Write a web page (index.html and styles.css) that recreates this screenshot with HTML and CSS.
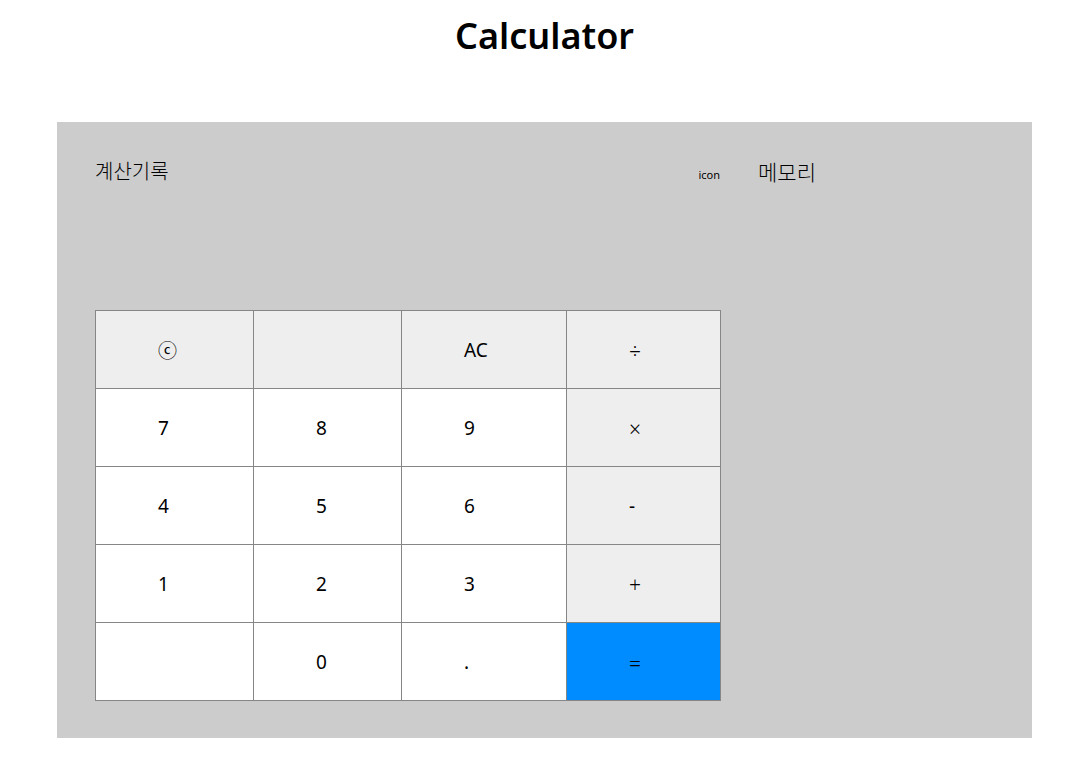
FILE: index.html
```html
<!DOCTYPE html>
<html lang="ko">
<head>
<meta charset="utf-8">
<meta name="viewport" content="width=device-width, initial-scale=1">
<title>Calculator</title>
<link rel="stylesheet" href="styles.css">
</head>
<body>
<h1 class="title">Calculator</h1>
<main class="calculator">
  <section class="main">
    <header class="history">
      <h2 class="heading">계산기록</h2>
      <span class="icon-label">icon</span>
    </header>
    <div class="keypad">
      <button class="key key-op" type="button">ⓒ</button>
      <span class="key key-op"></span>
      <button class="key key-op" type="button">AC</button>
      <button class="key key-op key-sign" type="button">÷</button>
      <button class="key" type="button">7</button>
      <button class="key" type="button">8</button>
      <button class="key" type="button">9</button>
      <button class="key key-op key-sign" type="button">×</button>
      <button class="key" type="button">4</button>
      <button class="key" type="button">5</button>
      <button class="key" type="button">6</button>
      <button class="key key-op" type="button">-</button>
      <button class="key" type="button">1</button>
      <button class="key" type="button">2</button>
      <button class="key" type="button">3</button>
      <button class="key key-op key-sign" type="button">+</button>
      <span class="key"></span>
      <button class="key" type="button">0</button>
      <button class="key" type="button">.</button>
      <button class="key key-sign key-equals" type="button">=</button>
    </div>
  </section>
  <aside class="memory">
    <h2 class="heading heading-memory">메모리</h2>
  </aside>
</main>
</body>
</html>
```
FILE: styles.css
```css
* {
  box-sizing: border-box;
}

body {
  margin: 0;
  background: #fff;
  color: #000;
  font-family: "Noto Sans", "Noto Sans CJK KR", sans-serif;
  font-size: 19px;
}

.title {
  margin: 0 48px 0 57px;
  padding: 10px 0 60px;
  font-size: 36px;
  line-height: 52px;
  font-weight: 600;
  text-align: center;
}

.calculator {
  display: grid;
  grid-template-columns: 626fr 236fr;
  gap: 37px;
  margin: 0 48px 29px 57px;
  padding: 34px 38px 37px;
  background: #ccc;
}

.history {
  display: flex;
  justify-content: space-between;
  align-items: flex-start;
  min-height: 154px;
}

.heading {
  margin: 0;
  font-size: 20px;
  line-height: 32px;
  font-weight: 300;
}

.heading-memory {
  font-size: 21px;
}

.icon-label {
  padding-right: 1px;
  font-size: 11px;
  line-height: 38px;
}

.keypad {
  display: grid;
  grid-template-columns: 157fr 147fr 164fr 153fr;
  grid-auto-rows: 77px;
  gap: 1px;
  padding: 1px;
  background: #868686;
}

.key {
  margin: 0;
  padding: 1px 0 0 62px;
  border: 0;
  border-radius: 0;
  background: #fff;
  color: #000;
  font: inherit;
  text-align: left;
}

.key-op {
  background: #eee;
}

.key-sign {
  padding: 3px 0 0 62px;
  font-size: 21px;
  font-weight: 300;
}

.key-equals {
  background: #008cff;
}
```
